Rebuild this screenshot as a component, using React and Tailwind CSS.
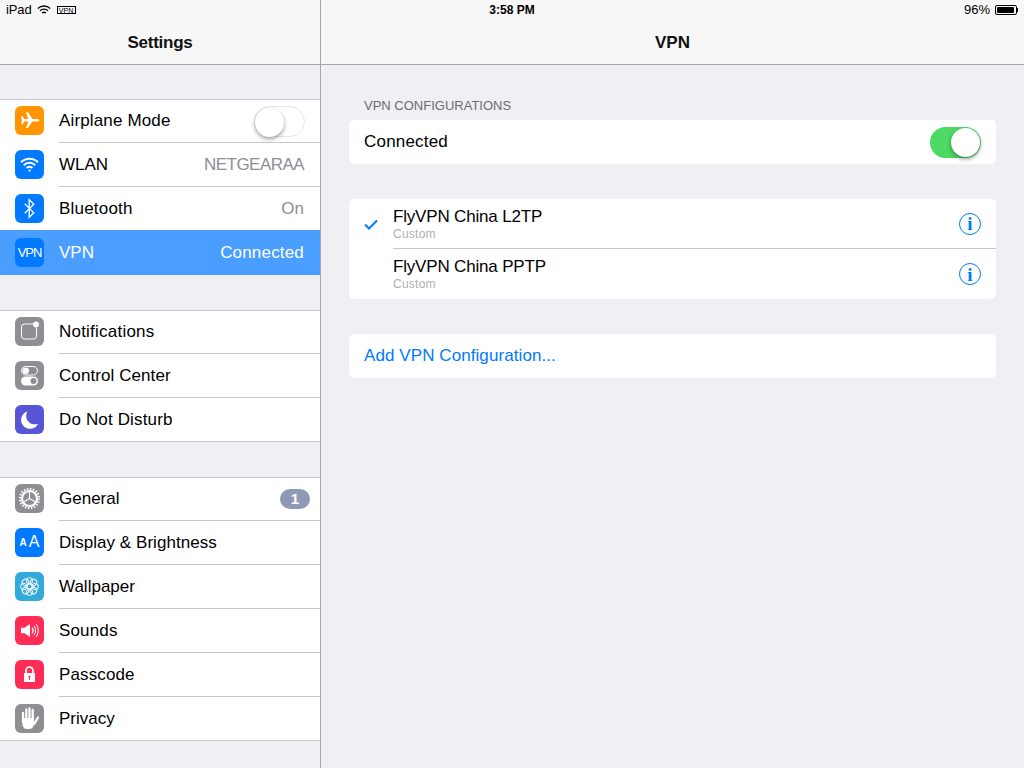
import React from 'react';

const FONT = { fontFamily: '"Liberation Sans", Arial, sans-serif' };

// --- settings icons, all drawn on a 29x29 box ---
const AirplaneIcon = () => (
  <svg viewBox="0 0 29 29" className="w-[29px] h-[29px]">
    <path fill="#fff" d="M24.5 14.2c0-.8-1.6-1.3-3.2-1.3h-3.9L12.9 6.3h-2l2.4 6.6H9.2L7.6 10.2H6.2l.7 4-.7 4h1.4l1.6-2.7h4.1l-2.4 6.5h2l4.5-6.5h3.9c1.6 0 3.2-.5 3.2-1.3z" />
  </svg>
);

const WifiIcon = () => (
  <svg viewBox="0 0 29 29" className="w-[29px] h-[29px]" fill="none" stroke="#fff" strokeWidth="2">
    <path d="M6 12.2a12 12 0 0 1 17 0" />
    <path d="M8.8 15.2a8 8 0 0 1 11.4 0" />
    <path d="M11.6 18a4 4 0 0 1 5.8 0" />
    <circle cx="14.5" cy="20.6" r="1.1" fill="#fff" stroke="none" />
  </svg>
);

const BluetoothIcon = () => (
  <svg viewBox="0 0 29 29" className="w-[29px] h-[29px]" fill="none" stroke="#fff" strokeWidth="1.3">
    <path d="M9.8 9.8l9 9-4.6 4.7V5.5l4.6 4.7-9 9" />
  </svg>
);

const NotificationsIcon = () => (
  <svg viewBox="0 0 29 29" className="w-[29px] h-[29px]" fill="none">
    <path d="M18 7H9.5A3 3 0 0 0 6.500 10v9a3 3 0 0 0 3 3h9a3 3 0 0 0 3-3v-8.500" stroke="#fff" strokeWidth="1" />
    <circle cx="21" cy="7.500" r="3" fill="#fff" />
  </svg>
);

const ControlCenterIcon = () => (
  <svg viewBox="0 0 29 29" className="w-[29px] h-[29px]" fill="none">
    <rect x="6.500" y="5.500" width="16" height="8.500" rx="4.250" stroke="#fff" strokeWidth="1" />
    <circle cx="10.700" cy="9.750" r="3.300" fill="#fff" />
    <rect x="6" y="15.500" width="17" height="9" rx="4.500" fill="#fff" />
    <circle cx="18.500" cy="20" r="3" fill="#8e8e93" />
  </svg>
);

const MoonIcon = () => (
  <svg viewBox="0 0 29 29" className="w-[29px] h-[29px]">
    <path fill="#fff" d="M12.600 6.200a9 9 0 1 0 10.600 12.600 8.600 8.600 0 0 1-3.500.5c-4.800 0-8.500-3.700-8.500-8.300 0-1.800.5-3.500 1.400-4.800z" />
  </svg>
);

const GearIcon = () => (
  <svg viewBox="0 0 29 29" className="w-[29px] h-[29px]" fill="none" stroke="#fff">
    <circle cx="14.500" cy="14.500" r="9.600" strokeWidth="2.200" strokeDasharray="1.500 1.516" />
    <circle cx="14.500" cy="14.500" r="7.500" strokeWidth="2.200" />
    <path d="M14.500 14.500V7.500M14.500 14.500l6.100 3.500M14.500 14.500l-6.100 3.500" strokeWidth="1.100" />
  </svg>
);

const FlowerIcon = () => (
  <svg viewBox="0 0 29 29" className="w-[29px] h-[29px]" fill="none" stroke="#fff" strokeWidth="1">
    {[0, 45, 90, 135, 180, 225, 270, 315].map((a) => (
      <circle key={a} cx="14.500" cy="8.800" r="3.200" transform={`rotate(${a} 14.500 14.500)`} />
    ))}
    <circle cx="14.500" cy="14.500" r="2.600" />
  </svg>
);

const SoundsIcon = () => (
  <svg viewBox="0 0 29 29" className="w-[29px] h-[29px]" fill="none" stroke="#fff">
    <path fill="#fff" stroke="none" d="M6 11.700h3.500L15 8v13l-5.500-3.700H6z" />
    <path d="M17 12a3.600 3.600 0 0 1 0 5" strokeWidth="1.300" />
    <path d="M19 10a7 7 0 0 1 0 9" strokeWidth="1" />
    <path d="M21 8a10.500 10.500 0 0 1 0 13" strokeWidth="1" />
  </svg>
);

const LockIcon = () => (
  <svg viewBox="0 0 29 29" className="w-[29px] h-[29px]" fill="none">
    <path d="M11 13V10.500a3.500 3.500 0 0 1 7 0V13" stroke="#fff" strokeWidth="1.700" />
    <rect x="9" y="13" width="11" height="9" fill="#fff" />
    <circle cx="14.500" cy="16.800" r="1.100" fill="#ff2d55" />
    <rect x="14" y="17" width="1" height="3" fill="#ff2d55" />
  </svg>
);

const HandIcon = () => (
  <svg viewBox="0 0 29 29" className="w-[29px] h-[29px]" fill="none" stroke="#fff" strokeLinecap="round">
    <path d="M8 9v9M11.300 5.500V15M14.500 4.500V15M17.700 6V15" strokeWidth="2.300" />
    <path d="M19.500 19.500l3.500-6" strokeWidth="2.300" />
    <path fill="#fff" stroke="none" d="M6.900 14h12v3.500l1.500.6-2.200 4.400c-.7 1.300-1.800 2.500-3.500 2.500h-3c-2.500 0-3.800-1.800-4.200-4.500z" />
  </svg>
);

const AaIcon = () => (
  <div className="flex items-baseline justify-center text-white leading-none pb-[2px]">
    <span className="text-[10px] font-bold mr-[2px] -translate-y-px">A</span>
    <span className="text-[16px]">A</span>
  </div>
);

const VpnGlyph = () => <span className="text-white text-[13px] tracking-[-1px] leading-none">VPN</span>;

function Toggle({ on }) {
  return (
    <div className={`relative w-[51px] h-[31px] rounded-full ${on ? 'bg-[#4cd964]' : 'bg-white border border-[#e5e5ea]'}`}>
      <div className={`absolute top-[1px] w-[29px] h-[29px] rounded-full bg-white shadow-[0_2px_4px_rgba(0,0,0,0.4)] ${on ? 'right-[1px]' : 'left-0 top-0'}`} />
    </div>
  );
}

// One settings row. first/last change the height and the separator.
function Row({ icon, color, label, value, first, last, selected, right, track = 'tracking-[0.15px]', valueTrack = '' }) {
  const height = selected ? 'relative h-[45px] -mt-px' : first || last ? 'h-[43px]' : 'h-11';
  return (
    <div className={`flex ${height} ${selected ? 'bg-[#4a9eff]' : 'bg-white'}`}>
      <div className={`w-[59px] pl-[15px] ${first ? 'pt-[6px]' : selected ? 'pt-2' : 'pt-[7px]'}`}>
        <div className={`w-[29px] h-[29px] rounded-[6px] flex items-center justify-center ${color}`}>{icon}</div>
      </div>
      <div className={`flex-1 flex items-center justify-between text-[17px] ${last ? '' : 'border-b border-[#c8c7cc]'} ${selected ? 'text-white' : 'text-black'} ${right ? 'pr-[10px]' : 'pr-4'}`}>
        <span className={track}>{label}</span>
        {value && <span className={`${valueTrack} ${selected ? 'text-white' : 'text-[#8e8e93]'}`}>{value}</span>}
        {right}
      </div>
    </div>
  );
}

function InfoIcon() {
  return (
    <div className="w-[22px] h-[22px] rounded-full border border-[#007aff] flex items-center justify-center text-[#007aff] text-[19px] font-bold leading-none" style={{ fontFamily: '"Liberation Serif", serif' }}>
      i
    </div>
  );
}

function VpnRow({ name, checked, divider }) {
  return (
    <div className="flex h-[50px]">
      <div className="w-[44px] pl-[15px] flex items-center">
        {checked && (
          <svg viewBox="0 0 14 11" className="w-[14px] h-[11px]" fill="none" stroke="#007aff" strokeWidth="2">
            <path d="M1 5.500l4 4 8-8" />
          </svg>
        )}
      </div>
      <div className={`flex-1 flex items-center justify-between pr-[15px] ${divider ? 'border-b border-[#c8c7cc]' : ''}`}>
        <div className="flex flex-col self-start pt-2">
          <span className="text-[17px] leading-5 text-black tracking-[-0.18px]">{name}</span>
          <span className="text-[12px] leading-[14px] text-[#b0b0b3] tracking-[0.25px]">Custom</span>
        </div>
        <InfoIcon />
      </div>
    </div>
  );
}

export default function App() {
  return (
    <div className="flex w-[1024px] h-[768px] overflow-hidden bg-[#efeff4]" style={FONT}>
      {/* Left settings list */}
      <div className="w-[321px] h-full border-r border-[#a7a7aa] shrink-0">
        <div className="h-[65px] bg-[#f7f7f7] border-b border-[#a7a7aa]">
          <div className="h-5 flex items-center pl-[6px] text-[13px] text-black">
            <span className="tracking-[-0.1px]">iPad</span>
            <svg viewBox="0 0 14 10" className="w-[14px] h-[10px] ml-[5px]" fill="none" stroke="#000" strokeWidth="1.300">
              <path d="M.8 3.500a9 9 0 0 1 12.400 0" />
              <path d="M3 5.800a5.800 5.800 0 0 1 8 0" />
              <path d="M5.200 8a2.500 2.500 0 0 1 3.600 0" />
            </svg>
            <span className="ml-[6px] w-[19px] h-[8px] border border-black text-[7px] leading-[7px] text-center tracking-[0.2px]">VPN</span>
          </div>
          <div className="h-[44px] flex items-center justify-center pt-px text-[17px] font-bold text-[#111] tracking-[-0.25px]">Settings</div>
        </div>

        <div className="mt-[34px] border-t border-[#c8c7cc]">
          <Row first icon={<AirplaneIcon />} color="bg-[#ff9500]" label="Airplane Mode" right={<div className="mr-[5px]"><Toggle /></div>} />
          <Row icon={<WifiIcon />} color="bg-[#007aff]" label="WLAN" track="tracking-[0px]" value="NETGEARAA" valueTrack="tracking-[-0.55px]" />
          <Row icon={<BluetoothIcon />} color="bg-[#007aff]" label="Bluetooth" track="tracking-[0.2px]" value="On" />
          <Row selected last icon={<VpnGlyph />} color="bg-[#007aff]" label="VPN" track="tracking-[0px]" value="Connected" valueTrack="tracking-[0.18px]" />
        </div>

        <div className="mt-[35px] border-t border-b border-[#c8c7cc]">
          <Row first icon={<NotificationsIcon />} color="bg-[#8e8e93]" label="Notifications" track="tracking-[0.22px]" />
          <Row icon={<ControlCenterIcon />} color="bg-[#8e8e93]" label="Control Center" track="tracking-[0.08px]" />
          <Row last icon={<MoonIcon />} color="bg-[#5856d6]" label="Do Not Disturb" />
        </div>

        <div className="mt-[35px] border-t border-b border-[#c8c7cc]">
          <Row
            first
            icon={<GearIcon />}
            color="bg-[#8e8e93]"
            label="General"
            track="tracking-[0px]"
            right={<span className="w-[30px] h-5 rounded-full bg-[#8e9ab5] text-white text-[15px] font-bold flex items-center justify-center">1</span>}
          />
          <Row icon={<AaIcon />} color="bg-[#007aff]" label="Display & Brightness" track="tracking-[0.05px]" />
          <Row icon={<FlowerIcon />} color="bg-[#34aadc]" label="Wallpaper" track="tracking-[0px]" />
          <Row icon={<SoundsIcon />} color="bg-[#ff2d55]" label="Sounds" />
          <Row icon={<LockIcon />} color="bg-[#ff2d55]" label="Passcode" track="tracking-[0.12px]" />
          <Row last icon={<HandIcon />} color="bg-[#8e8e93]" label="Privacy" track="tracking-[0px]" />
        </div>
      </div>

      {/* VPN detail pane */}
      <div className="flex-1 min-w-0">
        <div className="h-[65px] bg-[#f7f7f7] border-b border-[#a7a7aa]">
          <div className="h-5 flex items-center text-[13px] text-black pr-[6px]">
            <span className="w-[382px] text-center font-bold text-[12px]">3:58 PM</span>
            <span className="ml-auto mr-[5px]">96%</span>
            <div className="flex items-center">
              <div className="w-[22px] h-[10px] border border-black rounded-[2px] p-px">
                <div className="w-[92%] h-full bg-black rounded-[1px]" />
              </div>
              <div className="w-px h-1 bg-black" />
            </div>
          </div>
          <div className="h-[44px] flex items-center justify-center pt-px text-[17px] font-bold text-[#111]">VPN</div>
        </div>

        <div className="px-7 pt-[33px]">
          <div className="pl-[15px] h-[22px] text-[13px] leading-4 text-[#6d6d72]">VPN CONFIGURATIONS</div>
          <div className="h-11 bg-white rounded-[5px] flex items-center justify-between pl-[15px] pr-[15px] text-[17px] text-black">
            <span className="tracking-[0.2px]">Connected</span>
            <Toggle on />
          </div>

          <div className="mt-[35px] h-[100px] bg-white rounded-[5px] overflow-hidden">
            <VpnRow name="FlyVPN China L2TP" checked divider />
            <VpnRow name="FlyVPN China PPTP" />
          </div>

          <div className="mt-[35px] h-11 bg-white rounded-[5px] flex items-center pl-[15px] text-[17px] text-[#007aff] tracking-[0.08px]">
            Add VPN Configuration...
          </div>
        </div>
      </div>
    </div>
  );
}
